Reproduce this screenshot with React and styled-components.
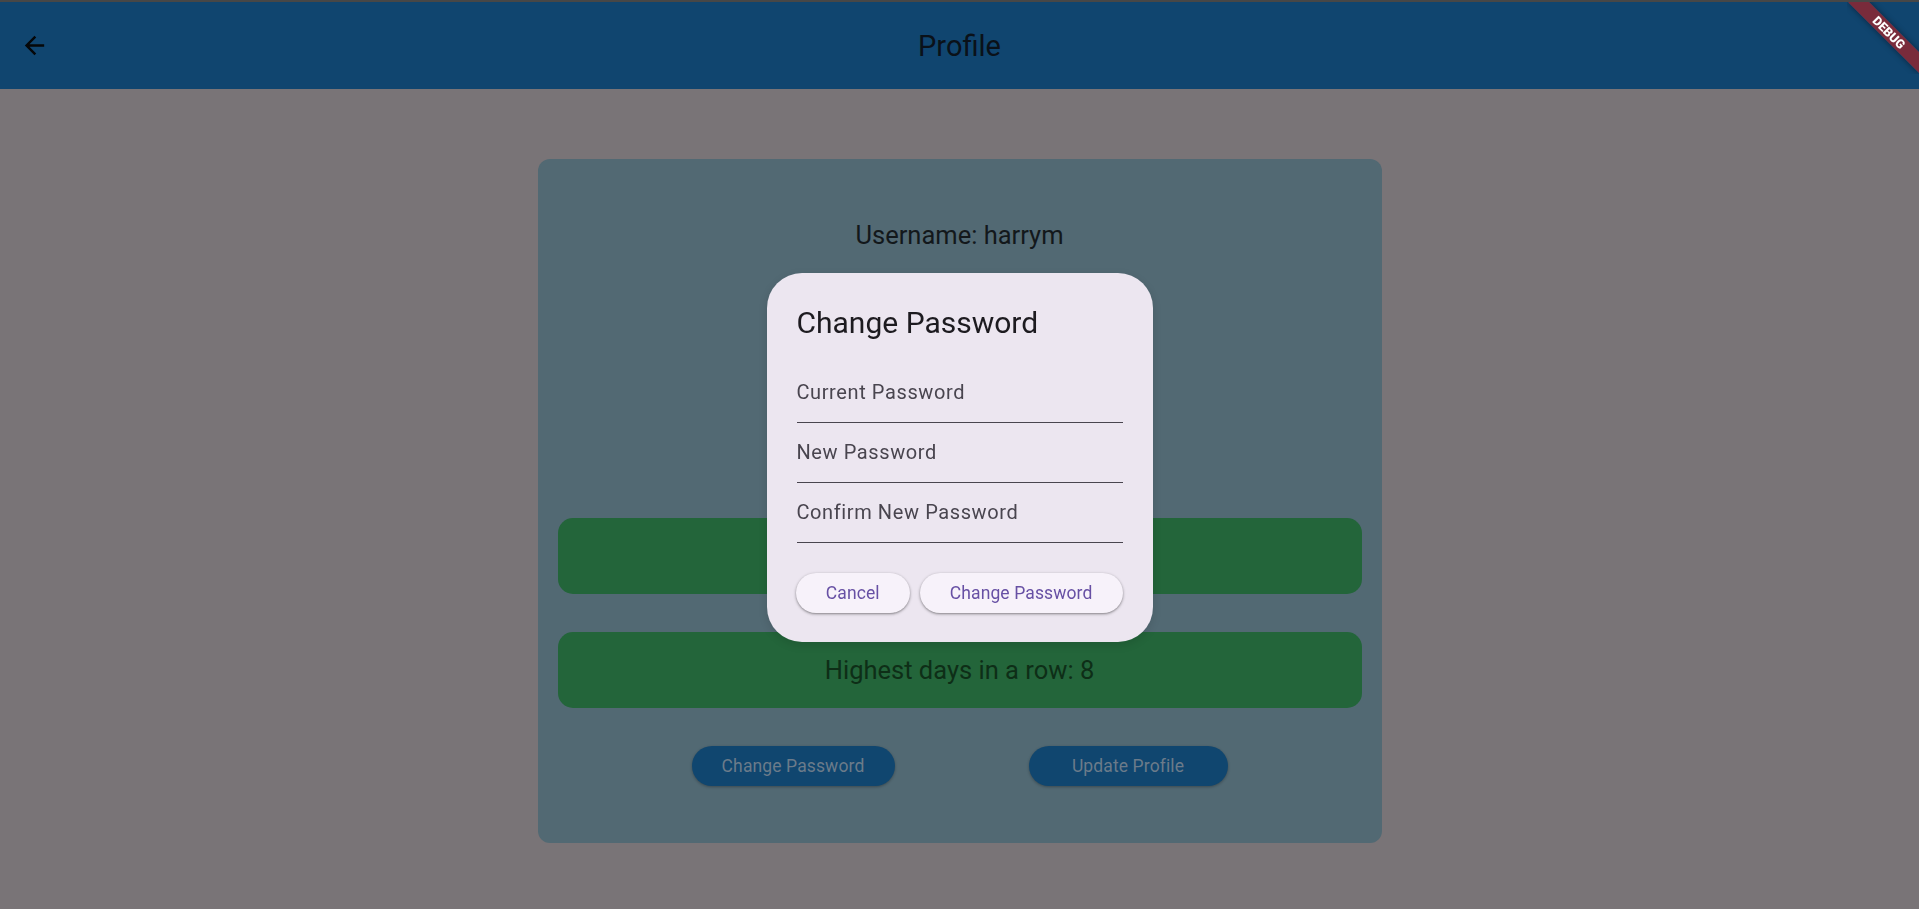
import styled, { createGlobalStyle } from 'styled-components';

// ── Global ─────────────────────────────────────────────────
const GlobalStyle = createGlobalStyle`
  * { box-sizing: border-box; }
  html, body {
    margin: 0;
    padding: 0;
    background: #797477;
    font-family: Roboto, "Noto Sans", "Liberation Sans", sans-serif;
  }
`;

// ── Page chrome ────────────────────────────────────────────
const Page = styled.div`
  min-height: 100vh;
  display: flex;
  flex-direction: column;
`;

const TopStrip = styled.div`
  height: 2px;
  background: #474747;
`;

const AppBar = styled.header`
  height: 87px;
  background: #10456f;
  display: grid;
  grid-template-columns: 80px 1fr 80px;
  align-items: center;
`;

const BackButton = styled.button`
  width: 29px;
  height: 29px;
  margin-left: 20px;
  padding: 0;
  border: none;
  background: none;
  color: #050709;
  display: flex;
  cursor: pointer;
`;

const AppTitle = styled.h1`
  margin: 0;
  text-align: center;
  font-size: 29px;
  font-weight: 400;
  color: #0a1119;
`;

const BannerCorner = styled.div`
  position: fixed;
  top: 2px;
  right: 0;
  width: 72px;
  height: 72px;
  overflow: hidden;
  pointer-events: none;
  z-index: 10;
`;

const Ribbon = styled.div`
  position: absolute;
  left: -8px;
  top: 22.5px;
  width: 100px;
  height: 15px;
  transform: rotate(45deg);
  background: rgba(183, 28, 28, 0.63);
  box-shadow: 0 0 6px rgba(0, 0, 0, 0.45);
  color: #fff;
  font-size: 12.5px;
  font-weight: 900;
  line-height: 15px;
  text-align: center;
`;

// ── Profile card ───────────────────────────────────────────
const Main = styled.main`
  display: flex;
  justify-content: center;
  padding-top: 70px;
`;

const Card = styled.section`
  width: 844px;
  background: #526973;
  border-radius: 12px;
  padding: 61px 20px 57px;
  display: flex;
  flex-direction: column;
`;

const Username = styled.div`
  text-align: center;
  font-size: 25.5px;
  line-height: 30px;
  color: #13181b;
`;

const StatBar = styled.div`
  height: 76px;
  margin-top: ${(p) => p.$gap}px;
  background: #23653a;
  border-radius: 15px;
  display: flex;
  align-items: center;
  justify-content: center;
  font-size: 25.5px;
  color: #0e2e17;
`;

const ButtonRow = styled.div`
  display: flex;
  justify-content: space-evenly;
  margin-top: 38px;
`;

const PillButton = styled.button`
  width: ${(p) => p.$w}px;
  height: 40px;
  flex-shrink: 0;
  border: none;
  border-radius: 20px;
  background: #10466f;
  color: #6b7b8a;
  font-family: inherit;
  font-size: 17.5px;
  letter-spacing: 0.12px;
  white-space: nowrap;
  box-shadow: 0 1px 3px rgba(0, 0, 0, 0.3);
  cursor: pointer;
`;

// ── Dialog ─────────────────────────────────────────────────
const Scrim = styled.div`
  position: fixed;
  inset: 0;
  display: flex;
  justify-content: center;
  align-items: flex-start;
  padding-top: 273px;
`;

const Dialog = styled.div`
  width: 386px;
  background: #ece6f0;
  border-radius: 35px;
  padding: 32px 30px 29px;
  box-shadow: 0 3px 10px rgba(0, 0, 0, 0.12);
`;

const DialogTitle = styled.h2`
  margin: 0 0 22px;
  font-size: 30px;
  font-weight: 400;
  line-height: 36px;
  color: #1d1b20;
`;

const Field = styled.label`
  display: block;
  padding: 17px 0 18px;
  border-bottom: 1px solid #49454f;
`;

const FieldInput = styled.input`
  display: block;
  width: 100%;
  height: 24px;
  padding: 0;
  border: none;
  outline: none;
  background: transparent;
  font-family: inherit;
  font-size: 20px;
  line-height: 24px;
  letter-spacing: 0.6px;
  color: #1d1b20;

  &::placeholder {
    color: #49454f;
    opacity: 1;
  }
`;

const Actions = styled.div`
  display: flex;
  justify-content: flex-end;
  gap: 10px;
  margin-top: 30px;
`;

const DialogButton = styled.button`
  height: 40px;
  padding: 0 30px;
  flex-shrink: 0;
  border: none;
  border-radius: 20px;
  background: #f7f2fa;
  color: #6750a4;
  font-family: inherit;
  font-size: 17.5px;
  letter-spacing: 0.12px;
  white-space: nowrap;
  box-shadow: 0 1px 2px rgba(0, 0, 0, 0.3), 0 1px 3px 1px rgba(0, 0, 0, 0.12);
  cursor: pointer;
`;

// ── Data ───────────────────────────────────────────────────
const fields = ['Current Password', 'New Password', 'Confirm New Password'];

function ArrowBack() {
  return (
    <svg width="29" height="29" viewBox="0 0 24 24" fill="currentColor">
      <path d="M20 11H7.83l5.59-5.59L12 4l-8 8 8 8 1.41-1.41L7.83 13H20v-2z" />
    </svg>
  );
}

// ── Component ──────────────────────────────────────────────
export default function App() {
  return (
    <Page>
      <GlobalStyle />
      <TopStrip />
      <AppBar>
        <BackButton aria-label="Back">
          <ArrowBack />
        </BackButton>
        <AppTitle>Profile</AppTitle>
        <span />
      </AppBar>

      <Main>
        <Card>
          <Username>Username: harrym</Username>
          <StatBar $gap={268}>Days in a row: 3</StatBar>
          <StatBar $gap={38}>Highest days in a row: 8</StatBar>
          <ButtonRow>
            <PillButton $w={203}>Change Password</PillButton>
            <PillButton $w={199}>Update Profile</PillButton>
          </ButtonRow>
        </Card>
      </Main>

      <Scrim>
        <Dialog>
          <DialogTitle>Change Password</DialogTitle>
          {fields.map((f) => (
            <Field key={f}>
              <FieldInput type="password" placeholder={f} />
            </Field>
          ))}
          <Actions>
            <DialogButton>Cancel</DialogButton>
            <DialogButton>Change Password</DialogButton>
          </Actions>
        </Dialog>
      </Scrim>

      <BannerCorner>
        <Ribbon>DEBUG</Ribbon>
      </BannerCorner>
    </Page>
  );
}
